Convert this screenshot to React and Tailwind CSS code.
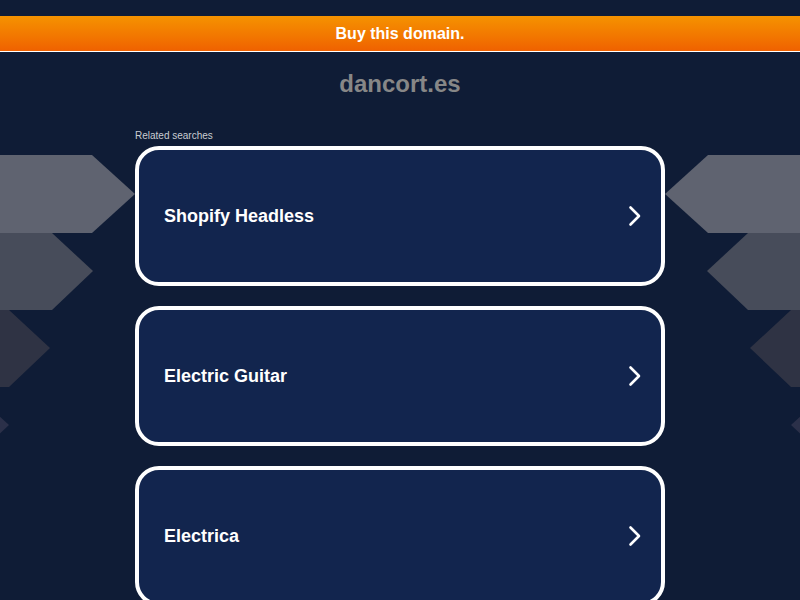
const searches = ['Shopify Headless', 'Electric Guitar', 'Electrica']

const Arrows = ({ mirror }) => (
  <svg
    className="absolute top-0 h-[600px] w-[800px]"
    style={{ left: 0, transform: mirror ? 'scaleX(-1)' : undefined }}
    viewBox="0 0 800 600"
  >
    <polygon points="0,155 92,155 135,194 92,233 0,233" fill="#5f6370" />
    <polygon points="0,233 52,233 93,271 52,310 0,310" fill="#474c5a" />
    <polygon points="0,310 9,310 50,348 9,387 0,387" fill="#2f3344" />
    <polygon points="-32,387 -32,464 9,425" fill="#2b3049" />
  </svg>
)

const ChevronRight = () => (
  <svg width="14" height="22" viewBox="0 0 14 22" fill="none">
    <path d="M2.5 2.5 L11 11 L2.5 19.5" stroke="white" strokeWidth="2.6" strokeLinecap="round" strokeLinejoin="round" />
  </svg>
)

const App = () => {
  return (
    <div
      className="relative h-[600px] w-[800px] overflow-hidden bg-[#0f1c36]"
      style={{ fontFamily: '"Liberation Sans", Arial, sans-serif' }}
    >
      <div className="pointer-events-none absolute inset-0">
        <Arrows />
        <Arrows mirror />
      </div>

      <div className="relative flex flex-col">
        <div className="h-4" />
        <div className="flex h-[35px] items-center justify-center bg-gradient-to-b from-[#f59200] to-[#ef6100] text-[16px] font-bold text-white">
          Buy this domain.
        </div>
        <div className="h-[1px] bg-white" />

        <div className="pt-[14px] text-center text-[24px] font-bold text-[#878787]">
          dancort.es
        </div>

        <div className="mx-auto mt-[26px] w-[530px]">
          <div className="mb-[3px] text-[10px] text-[#c9ccd2]">Related searches</div>
          <div className="flex flex-col gap-[20px]">
            {searches.map(item => (
              <div
                key={item}
                className="flex h-[140px] items-center justify-between rounded-[24px] border-4 border-white bg-[#12254e] pl-[25px] pr-[19px]"
              >
                <span className="text-[18px] font-bold text-white">{item}</span>
                <ChevronRight />
              </div>
            ))}
          </div>
        </div>
      </div>
    </div>
  )
}

export default App
